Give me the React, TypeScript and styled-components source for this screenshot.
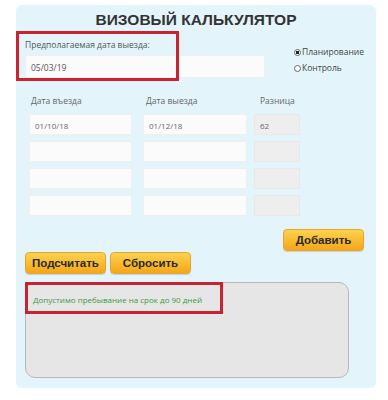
import styled, { createGlobalStyle } from 'styled-components'

const GlobalStyle = createGlobalStyle`
    body {
        margin: 0;
        background: #fff;
        font-family: 'Open Sans', 'DejaVu Sans', sans-serif;
    }
`

const rows = [
    { from: '01/10/18', to: '01/12/18', diff: '62' },
    { from: '', to: '', diff: '' },
    { from: '', to: '', diff: '' },
    { from: '', to: '', diff: '' },
]

export default function App() {
    return (
        <>
            <GlobalStyle />
            <StyledPage>
                <StyledPanel>
                    <StyledHighlight style={{ left: 0, top: 26, width: 163, height: 50 }} />
                    <StyledTitle>ВИЗОВЫЙ КАЛЬКУЛЯТОР</StyledTitle>
                    <StyledTopRow>
                        <StyledField>
                            <StyledFieldLabel>Предполагаемая дата выезда:</StyledFieldLabel>
                            <StyledDateInput>05/03/19</StyledDateInput>
                        </StyledField>
                        <StyledRadios>
                            <StyledRadio><StyledDot $checked />Планирование</StyledRadio>
                            <StyledRadio><StyledDot />Контроль</StyledRadio>
                        </StyledRadios>
                    </StyledTopRow>
                    <StyledTable>
                        <StyledHead>Дата въезда</StyledHead>
                        <StyledHead>Дата выезда</StyledHead>
                        <StyledHead>Разница</StyledHead>
                        {rows.map((r, i) => (
                            <StyledRowCells key={i}>
                                <StyledCell>{r.from}</StyledCell>
                                <StyledCell>{r.to}</StyledCell>
                                <StyledCell $disabled>{r.diff}</StyledCell>
                            </StyledRowCells>
                        ))}
                    </StyledTable>
                    <StyledAddRow>
                        <StyledButton>Добавить</StyledButton>
                    </StyledAddRow>
                    <StyledActions>
                        <StyledButton>Подсчитать</StyledButton>
                        <StyledButton>Сбросить</StyledButton>
                    </StyledActions>
                    <StyledResult>
                        <StyledHighlight style={{ left: -1, top: -1, width: 198, height: 32 }} />
                        <StyledMessage>Допустимо пребывание на срок до 90 дней</StyledMessage>
                    </StyledResult>
                </StyledPanel>
            </StyledPage>
        </>
    )
}

const StyledPage = styled.div`
    width: 388px;
    height: 400px;
    padding: 5px 0 0 16px;
    box-sizing: border-box;
`

const StyledPanel = styled.div`
    position: relative;
    width: 360px;
    height: 383px;
    box-sizing: border-box;
    background: #e3f5fb;
    border-radius: 6px;
    padding: 0 12px 0 9px;
`

const StyledHighlight = styled.div`
    position: absolute;
    box-sizing: border-box;
    border: 3px solid #c92231;
    pointer-events: none;
`

const StyledTitle = styled.div`
    text-align: center;
    padding: 6px 0 0 3px;
    height: 26px;
    box-sizing: border-box;
    font-family: 'Liberation Sans', Arial, sans-serif;
    font-weight: bold;
    font-size: 15.5px;
    color: #333;
`

const StyledTopRow = styled.div`
    display: flex;
    align-items: flex-start;
    margin-top: 8px;
`

const StyledField = styled.div`
    display: flex;
    flex-direction: column;
    width: 241px;
`

const StyledFieldLabel = styled.div`
    font-size: 8.5px;
    color: #555;
    height: 12px;
    line-height: 12px;
`

const StyledDateInput = styled.div`
    margin-top: 4px;
    height: 23px;
    line-height: 23px;
    background: #fbfbfb;
    border: 1px solid #eef0f0;
    box-sizing: border-box;
    padding-left: 5px;
    font-size: 8.5px;
    color: #555;
`

const StyledRadios = styled.div`
    display: flex;
    flex-direction: column;
    gap: 4px;
    margin: 7px 0 0 29px;
`

const StyledRadio = styled.div`
    display: flex;
    align-items: center;
    font-size: 8.5px;
    color: #444;
    line-height: 12px;
`

const StyledDot = styled.span<{ $checked?: boolean }>`
    width: 7px;
    height: 7px;
    border: 1px solid #666;
    border-radius: 50%;
    box-sizing: border-box;
    margin-right: 1px;
    background: ${p => (p.$checked ? 'radial-gradient(circle, #222 0 1.6px, #fff 2px)' : '#fff')};
`

const StyledTable = styled.div`
    display: grid;
    grid-template-columns: 103px 104px 42px;
    column-gap: 11px;
    row-gap: 6px;
    margin: 17px 0 0 4px;
    width: 275px;
`

const StyledHead = styled.div`
    font-size: 8.5px;
    color: #666;
    padding-left: 2px;
    height: 12px;
    line-height: 12px;
    margin-bottom: 1px;
    &:nth-child(2) {
        padding-left: 3px;
    }
`

const StyledRowCells = styled.div`
    display: contents;
`

const StyledCell = styled.div<{ $disabled?: boolean }>`
    height: 21px;
    line-height: 21px;
    box-sizing: border-box;
    border: 1px solid ${p => (p.$disabled ? '#e8e8e8' : '#eef0f0')};
    background: ${p => (p.$disabled ? '#eeeeee' : '#fbfbfb')};
    padding-left: 5px;
    font-size: 8px;
    color: #666;
    &:nth-child(3n) {
        margin-left: -4px;
    }
`

const StyledAddRow = styled.div`
    display: flex;
    justify-content: flex-end;
    margin-top: 13px;
`

const StyledButton = styled.div`
    display: flex;
    align-items: center;
    justify-content: center;
    width: 81px;
    height: 22px;
    box-sizing: border-box;
    border-radius: 4px;
    background: linear-gradient(#fcd24e, #f4a61a);
    border: 1px solid #e9a52a;
    box-shadow: 0 1px 1px rgba(0, 0, 0, 0.15);
    font-family: 'Liberation Sans', Arial, sans-serif;
    font-weight: bold;
    font-size: 11.5px;
    color: #2a2a2a;
`

const StyledActions = styled.div`
    display: flex;
    gap: 4px;
    margin-top: 1px;
`

const StyledResult = styled.div`
    position: relative;
    margin-top: 8px;
    width: 324px;
    height: 96px;
    box-sizing: border-box;
    background: #e6e6e6;
    border: 1px solid #b8b8b8;
    border-radius: 10px;
`

const StyledMessage = styled.div`
    padding: 11px 0 0 7px;
    font-size: 8px;
    color: #3c9a3c;
`
